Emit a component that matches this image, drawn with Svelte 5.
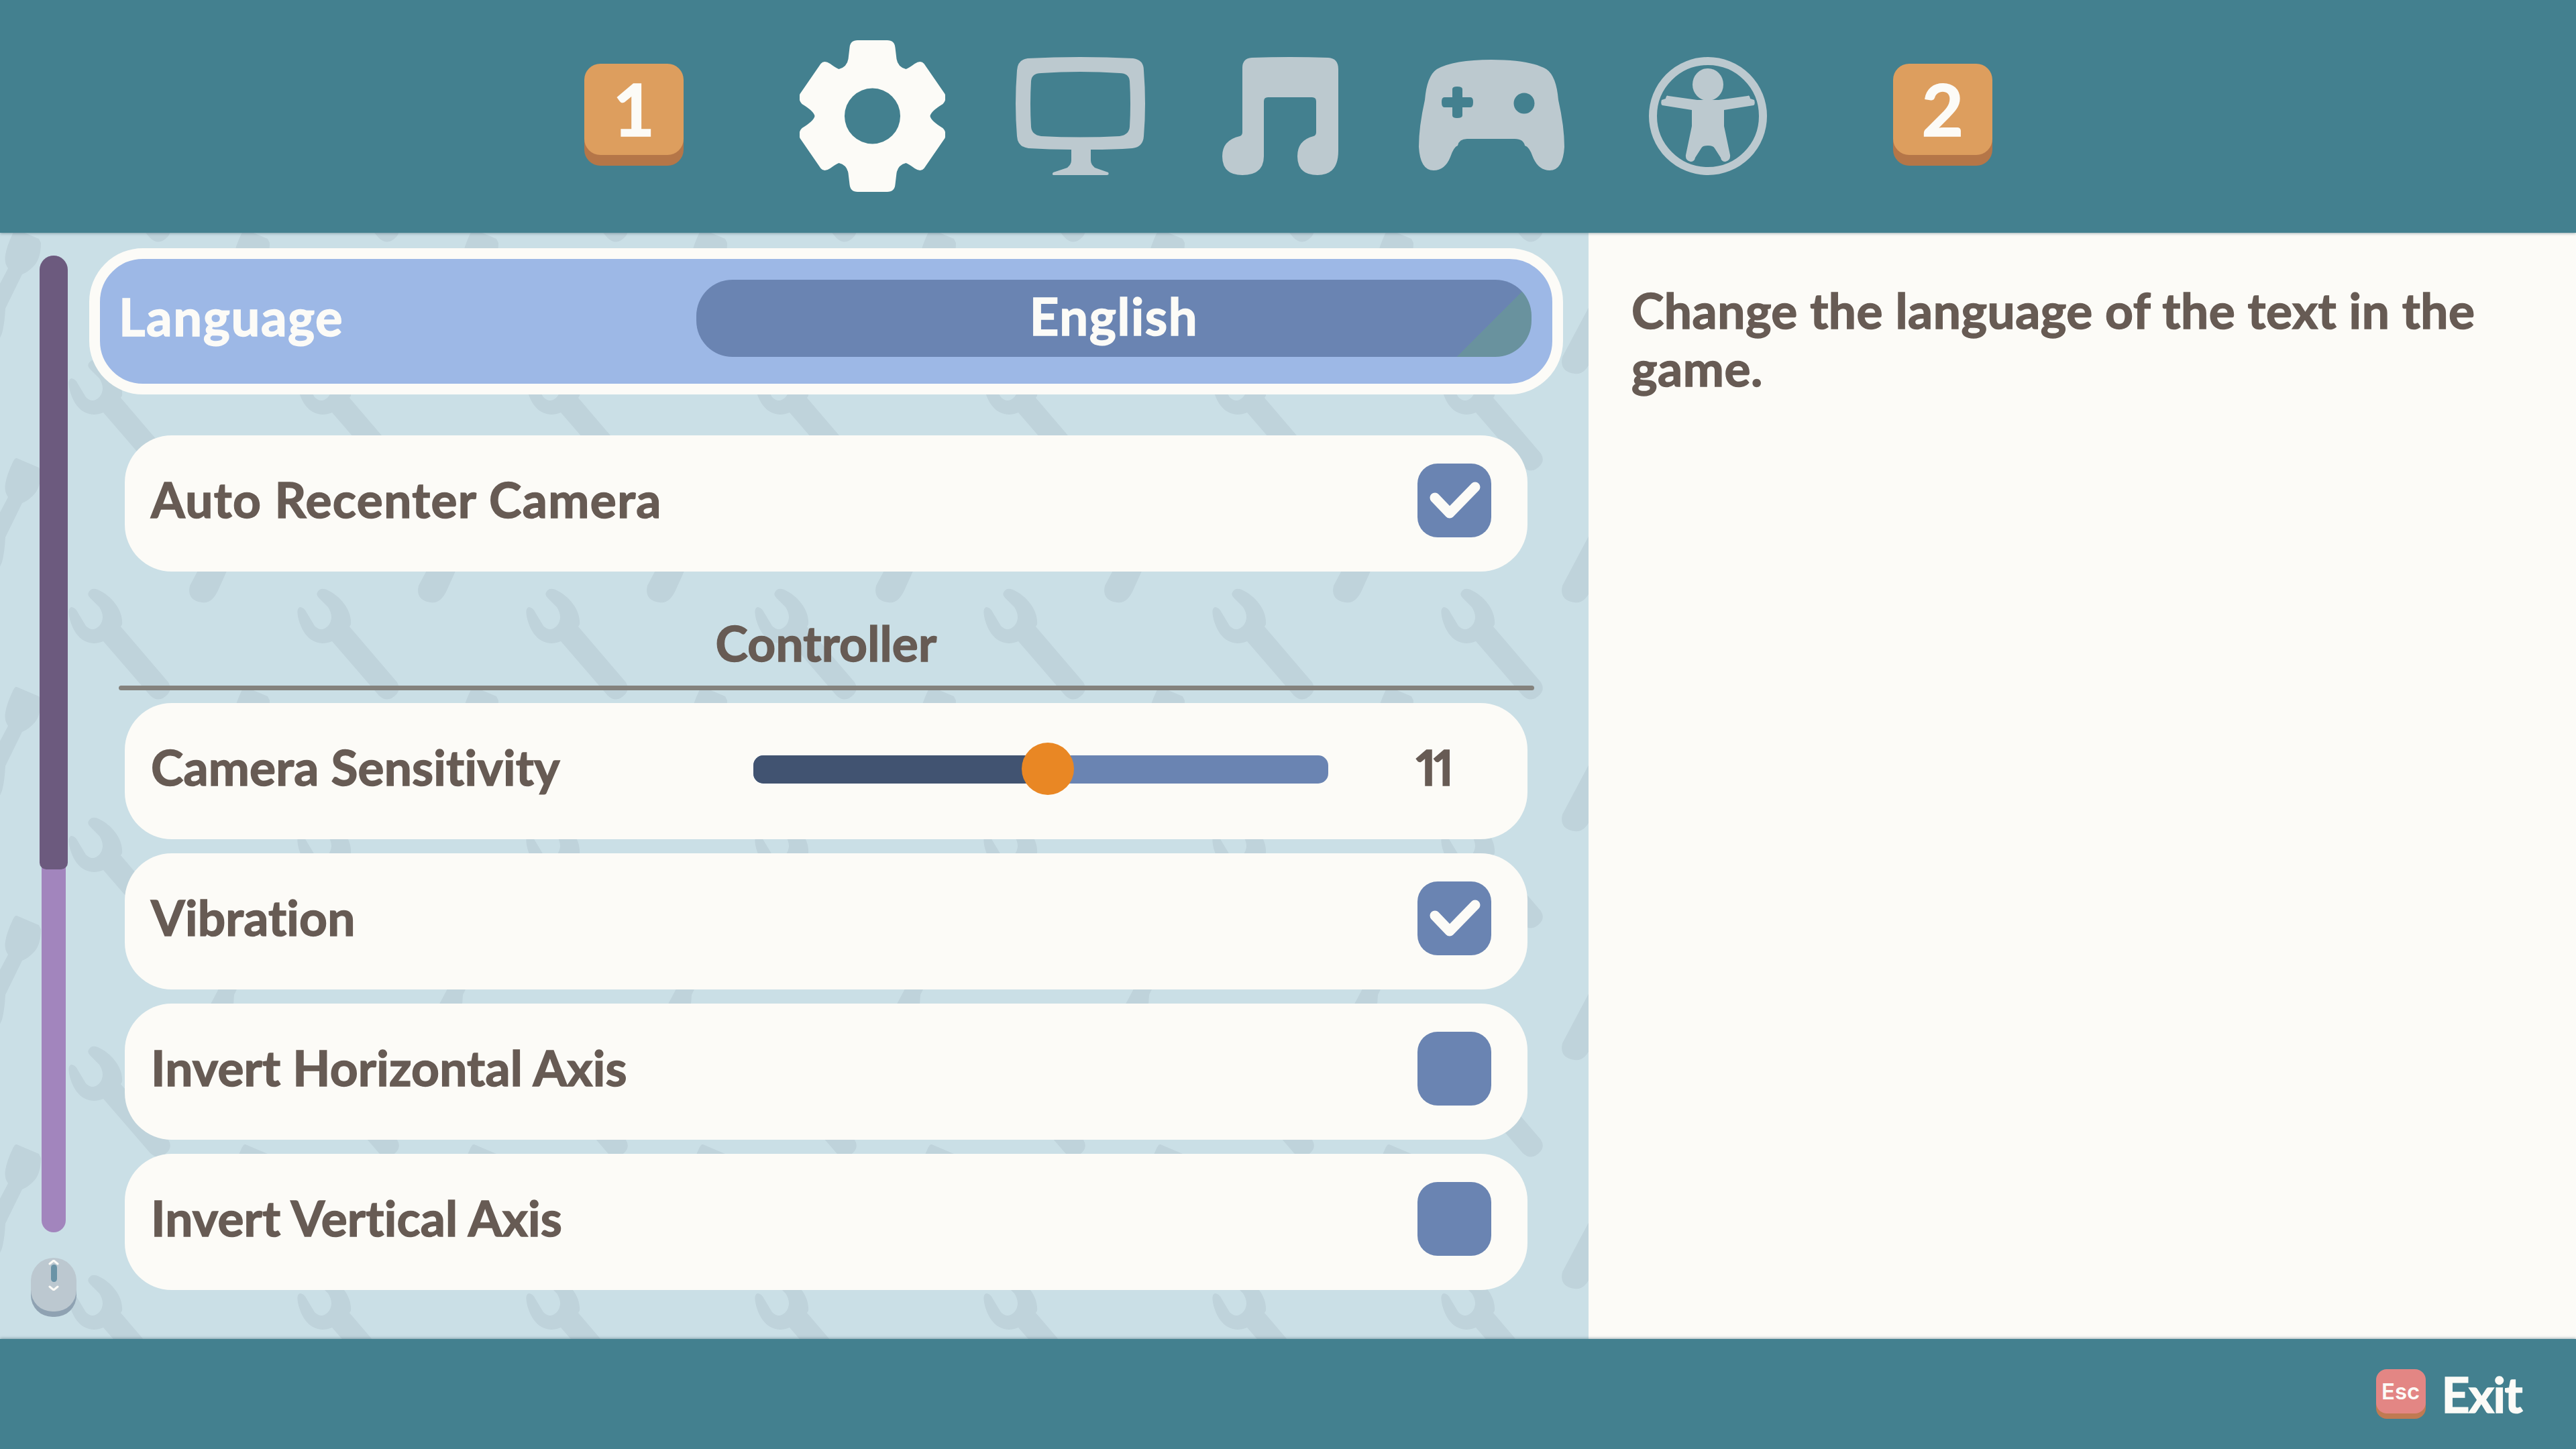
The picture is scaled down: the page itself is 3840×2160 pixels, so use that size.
<script>
  const gear = "M-22-113H22Q33-113 34-102L36-85Q38-73 50-70Q55-72 63-78Q72-84 77-78L108-33Q111-24 105-18Q87-7 86 0Q87 7 105 18Q111 24 108 33L77 78Q72 84 63 78Q55 72 50 70Q38 73 36 85L34 102Q33 113 22 113H-22Q-33 113-34 102L-36 85Q-38 73-50 70Q-55 72-63 78Q-72 84-77 78L-108 33Q-111 24-105 18Q-87 7-86 0Q-87-7-105-18Q-111-24-108-33L-77-78Q-72-84-63-78Q-55-72-50-70Q-38-73-36-85L-34-102Q-33-113-22-113ZM0-41.5A41.5 41.5 0 1 0 0 41.5A41.5 41.5 0 1 0 0-41.5Z";
  const wrench = "M30 6Q34-2 44 2C66 12 82 34 80 54L78 57L149 140Q155 150 148 158Q135 172 122 160L52 79C30 88 10 76 2 46Q-2 30 4 28Q10 28 14 36L26 56Q36 66 46 56Q56 44 46 28L32 14Q28 10 30 6Z";
  const driver = "M0 0L33 14L36 20Q36 45 24 56Q16 64 8 67L-17 118Q-18 140-22 155L-40 195Q-50 218-65 215Q-88 212-83 190L-13 58Q-19 50-17 38Q-15 25-6 6Q-3-1 0 0Z";
  const tile = 341;
  const wrenchSpots = [[102, 189], [102, 189 - tile]];
  const driverSpots = [[25, -5], [25, 336], [25 + tile, -5], [25 + tile, 336]];

  const controllerRows = [
    { label: "Vibration", checked: true },
    { label: "Invert Horizontal Axis", checked: false },
    { label: "Invert Vertical Axis", checked: false }
  ];
</script>

{#snippet checkbox(checked)}
  <span class="box">
    {#if checked}
      <svg width="110" height="110" viewBox="0 0 110 110">
        <path d="M26 51L48 74L86 35" fill="none" stroke="#fcfbf7" stroke-width="15" stroke-linecap="round" stroke-linejoin="round" />
      </svg>
    {/if}
  </span>
{/snippet}

<div class="screen">
  <header class="top">
    <span class="key key-one">1</span>
    <svg class="gear" width="217" height="226" viewBox="-108.5 -113 217 226">
      <path d={gear} fill="#fcfbf7" fill-rule="evenodd" />
    </svg>
    <svg class="monitor" width="193" height="176" viewBox="0 0 193 176">
      <path fill="#bcc9cf" fill-rule="evenodd" d="M18 2Q96-2 175 2Q191 4 191 20Q195 70 191 118Q190 134 174 136Q146 138 112 138L112 154Q112 160 118 165L138 172Q140 176 136 176L58 176Q53 176 56 172L77 165Q83 160 83 154L83 138Q50 138 19 136Q3 134 2 118Q-2 70 2 20Q3 4 18 2ZM38 24Q96 20 155 24Q169 24 170 36Q172 70 170 104Q169 116 155 118Q96 121 38 118Q24 116 23 104Q21 70 23 36Q24 24 38 24Z" />
    </svg>
    <svg class="music" width="173" height="176" viewBox="0 0 173 176">
      <path fill="#bcc9cf" d="M30 16Q30 2 44 1Q100-1 158 1Q173 2 173 18L173 140Q173 176 142 176Q112 176 112 148Q112 124 136 118Q140 117 140 112L140 66Q140 60 134 60L68 60Q62 60 62 66L62 148Q62 176 30 176Q0 176 0 148Q0 124 26 118Q30 117 30 112Z" />
    </svg>
    <svg class="pad" width="217" height="165" viewBox="0 0 217 165">
      <path fill="#bcc9cf" fill-rule="evenodd" d="M108 0Q165 0 190 14Q205 24 208 60Q217 100 217 130Q215 165 195 165Q178 165 170 145Q165 130 158 128Q156 118 143 118L72 118Q60 118 58 128Q52 130 47 145Q39 165 22 165Q2 165 0 130Q0 100 9 60Q12 24 27 14Q52 0 108 0ZM50 44Q50 40 57 40Q65 40 65 44L65 56L77 56Q81 56 81 63Q81 71 77 71L65 71L65 83Q65 87 57 87Q50 87 50 83L50 71L38 71Q34 71 34 63Q34 56 38 56L50 56ZM157 49.5A15.5 15.5 0 1 0 157 80.5A15.5 15.5 0 1 0 157 49.5Z" />
    </svg>
    <svg class="access" width="176" height="176" viewBox="-88 -88 176 176">
      <circle r="82" fill="none" stroke="#bcc9cf" stroke-width="12" />
      <ellipse cy="-47" rx="23" ry="24" fill="#bcc9cf" />
      <path fill="#bcc9cf" d="M-16-24L-59-30Q-62-32-63-26L-69-24Q-71-18-68-16L-24-9L-24 15L-33 58Q-34 66-26 68Q-20 68-19 62L-10 48Q-8 44 0 44Q8 44 10 48L19 62Q20 68 26 68Q34 66 33 58L24 15L24-9L68-16Q71-18 69-24L63-26Q62-32 59-30L16-24Z" />
    </svg>
    <span class="key key-two">2</span>
  </header>

  <main class="middle">
    <section class="left">
      <svg class="tools" width="100%" height="100%">
        <defs>
          <pattern id="tools" width={tile} height={tile} patternUnits="userSpaceOnUse">
            {#each wrenchSpots as [x, y]}
              <path d={wrench} fill="#bfd3db" transform="translate({x} {y})" />
            {/each}
            {#each driverSpots as [x, y]}
              <path d={driver} fill="#bfd3db" transform="translate({x} {y})" />
            {/each}
          </pattern>
        </defs>
        <rect width="100%" height="100%" fill="url(#tools)" />
      </svg>

      <div class="scroll">
        <div class="track"><div class="thumb"></div></div>
        <div class="mouse">
          <span class="wheel"></span>
          <svg class="arrows" width="20" height="46" viewBox="0 0 20 46">
            <path d="M4 6L10 1L16 6M4 40L10 45L16 40" fill="none" stroke="#fcfbf7" stroke-width="3" stroke-linecap="round" />
          </svg>
        </div>
      </div>

      <div class="list">
        <div class="selected">
          <span class="selected-label">Language</span>
          <span class="pill">English</span>
        </div>

        <div class="row first">
          <span class="label">Auto Recenter Camera</span>
          {@render checkbox(true)}
        </div>

        <h2 class="heading">Controller</h2>
        <div class="rule"></div>

        <div class="row slider-row">
          <span class="label">Camera Sensitivity</span>
          <div class="slider">
            <div class="fill"></div>
            <div class="knob"></div>
          </div>
          <span class="label value">11</span>
        </div>

        {#each controllerRows as row}
          <div class="row">
            <span class="label">{row.label}</span>
            {@render checkbox(row.checked)}
          </div>
        {/each}
      </div>
    </section>

    <aside class="right">
      <p>Change the language of the text in the game.</p>
    </aside>
  </main>

  <footer class="bottom">
    <span class="esc">Esc</span>
    <span class="exit">Exit</span>
  </footer>
</div>

<style>
  :global(body) {
    margin: 0;
    background: #43808f;
  }

  .screen {
    width: 3840px;
    height: 2160px;
    display: flex;
    flex-direction: column;
    overflow: hidden;
    font-family: "Lato", "Noto Sans", sans-serif;
    font-weight: 700;
    font-size: 73px;
    letter-spacing: 0.2px;
    font-variant-ligatures: none;
    -webkit-text-stroke: 1.5px currentColor;
    color: #675b54;
  }

  .top {
    height: 347px;
    flex: none;
    box-sizing: border-box;
    padding: 0 0 6px 871px;
    display: flex;
    align-items: center;
    background: #43808f;
    position: relative;
    z-index: 2;
    box-shadow: 0 1px 4px rgba(40, 80, 95, 0.45);
  }

  .key {
    width: 148px;
    height: 136px;
    margin-bottom: 16px;
    padding-bottom: 4px;
    box-sizing: border-box;
    border-radius: 24px;
    background: #dd9e5e;
    box-shadow: 0 16px 0 #b57648;
    display: flex;
    align-items: center;
    justify-content: center;
    color: #fcfbf7;
    font-size: 108px;
    line-height: 1;
    flex: none;
  }

  .gear { margin: 4px 0 0 173px; flex: none; }
  .monitor { margin: 4px 0 0 105px; flex: none; }
  .music { margin: 4px 0 0 115px; flex: none; }
  .pad { margin: 2px 0 0 120px; flex: none; }
  .access { margin: 4px 0 0 126px; flex: none; }
  .key-two { margin-left: 188px; }

  .middle {
    flex: 1;
    display: flex;
    min-height: 0;
  }

  .left {
    width: 2368px;
    flex: none;
    box-sizing: border-box;
    padding: 23px 0 0 59px;
    display: flex;
    position: relative;
    overflow: hidden;
    background: #cadfe6;
  }

  .tools {
    position: absolute;
    inset: 0;
  }

  .scroll {
    width: 42px;
    flex: none;
    padding-top: 11px;
    display: flex;
    flex-direction: column;
    align-items: center;
    position: relative;
  }

  .track {
    width: 36px;
    height: 1456px;
    border-radius: 18px;
    background: #a285bd;
    display: flex;
    flex-direction: column;
    align-items: center;
  }

  .thumb {
    width: 42px;
    height: 915px;
    flex: none;
    border-radius: 21px 21px 10px 10px;
    background: #6c5a7e;
  }

  .mouse {
    width: 68px;
    height: 80px;
    margin-top: 38px;
    flex: none;
    border-radius: 34px 34px 32px 32px;
    background: #bcc8d0;
    box-shadow: 0 8px 0 #8fa2b2;
    position: relative;
    display: flex;
    justify-content: center;
  }

  .wheel {
    width: 9px;
    height: 26px;
    margin-top: 10px;
    border-radius: 5px;
    background: #6a93a6;
  }

  .arrows {
    position: absolute;
    left: 24px;
    top: 3px;
  }

  .list {
    width: 2197px;
    margin-left: 32px;
    flex: none;
    position: relative;
    display: flex;
    flex-direction: column;
    align-items: center;
  }

  .selected {
    width: 100%;
    height: 218px;
    box-sizing: border-box;
    border: 16px solid #fcfbf7;
    border-radius: 80px;
    background: #9db8e6;
    padding: 0 31px 9px 28px;
    display: flex;
    align-items: center;
    justify-content: space-between;
    color: #fcfbf7;
    font-size: 76px;
    letter-spacing: 1.6px;
  }

  .pill {
    width: 1245px;
    height: 115px;
    box-sizing: border-box;
    padding-bottom: 8px;
    border-radius: 54px;
    background: linear-gradient(135deg, #6a84b2 calc(100% - 79px), #69929e calc(100% - 79px));
    display: flex;
    align-items: center;
    justify-content: center;
  }

  .selected-label {
    margin-bottom: 7px;
  }

  .row {
    width: 2091px;
    height: 203px;
    box-sizing: border-box;
    flex: none;
    margin-bottom: 21px;
    padding: 0 54px 10px 39px;
    border-radius: 70px;
    background: #fcfbf7;
    display: flex;
    align-items: center;
    justify-content: space-between;
  }

  .label {
    margin-bottom: 4px;
  }

  .first {
    margin-top: 61px;
    margin-bottom: 0;
    letter-spacing: 1.4px;
  }

  .heading {
    height: 170px;
    margin: 0;
    box-sizing: border-box;
    padding-top: 62px;
    font: inherit;
    line-height: 88px;
  }

  .rule {
    width: 2110px;
    height: 7px;
    margin-bottom: 19px;
    flex: none;
    border-radius: 4px;
    background: #84827d;
  }

  .slider-row {
    position: relative;
  }

  .slider {
    position: absolute;
    left: 937px;
    top: 78px;
    width: 857px;
    height: 42px;
    border-radius: 15px;
    background: #6a84b2;
  }

  .fill {
    width: 420px;
    height: 100%;
    border-radius: 15px 0 0 15px;
    background: #415371;
  }

  .knob {
    position: absolute;
    left: 400px;
    top: -19px;
    width: 78px;
    height: 78px;
    border-radius: 50%;
    background: #e98724;
  }

  .value {
    margin-right: 60px;
    font-feature-settings: "pnum";
    letter-spacing: -4px;
  }

  .box {
    width: 110px;
    height: 110px;
    border-radius: 30px;
    background: #6a84b2;
    display: block;
    flex: none;
  }

  .box svg {
    display: block;
  }

  .right {
    flex: 1;
    box-sizing: border-box;
    padding: 72px 60px 0 64px;
    background: #fcfbf7;
  }

  .right p {
    margin: 0;
    line-height: 86px;
    letter-spacing: 0.55px;
  }

  .bottom {
    height: 164px;
    flex: none;
    box-sizing: border-box;
    padding: 0 81px 0 0;
    display: flex;
    align-items: center;
    justify-content: flex-end;
    background: #43808f;
    position: relative;
    z-index: 2;
    box-shadow: 0 -1px 4px rgba(40, 80, 95, 0.45);
    color: #fcfbf7;
  }

  .esc {
    width: 74px;
    height: 66px;
    margin-bottom: 8px;
    border-radius: 16px;
    background: #e38684;
    box-shadow: 0 8px 0 #c07a52;
    display: flex;
    align-items: center;
    justify-content: center;
    font-size: 33px;
    font-family: "Inter", sans-serif;
    font-weight: 600;
    letter-spacing: 0;
    -webkit-text-stroke: 0;
  }

  .exit {
    margin-left: 24px;
    letter-spacing: -1.6px;
  }
</style>
